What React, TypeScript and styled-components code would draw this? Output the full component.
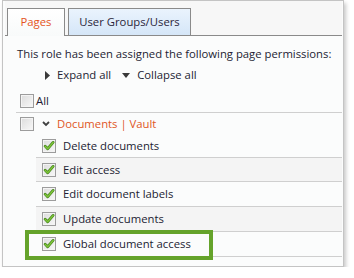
import styled, { createGlobalStyle } from 'styled-components';

const GlobalStyle = createGlobalStyle`
    body {
        margin: 0;
        background: #ffffff;
        font-family: "Open Sans", "Noto Sans", sans-serif;
        font-size: 11.3px;
        line-height: 16px;
        color: #231c33;
    }
`;

const Panel = styled.div`
    margin-left: 2px;
    width: 340px;
    height: 265px;
    border: 1px solid #c4c4c4;
    background: #fbfcfc;
    box-shadow: 2px 3px 4px rgba(0, 0, 0, 0.22);
`;

const TabBar = styled.div`
    display: flex;
    align-items: flex-end;
    gap: 3px;
    height: 34px;
    margin: 0 1px 0 2px;
    padding-left: 2px;
    background: #f7f7f7;
    border-bottom: 1px solid #8a8a8a;
`;

const Tab = styled.div<{ $active?: boolean; $w: number }>`
    box-sizing: border-box;
    display: flex;
    align-items: center;
    justify-content: center;
    width: ${p => p.$w}px;
    height: ${p => (p.$active ? '28px' : '27px')};
    margin-bottom: ${p => (p.$active ? '-1px' : '0')};
    padding-bottom: ${p => (p.$active ? '1px' : '0')};
    border: 1px solid #8a8a8a;
    border-bottom: none;
    color: ${p => (p.$active ? '#e5541c' : '#2a1f3a')};
    background: ${p =>
        p.$active
            ? 'linear-gradient(#ffffff, #f8fafa)'
            : 'linear-gradient(#eaf3fd, #d5e6f8)'};
`;

const Body = styled.div`
    padding: 10px 0 0 14px;
`;

const Intro = styled.p`
    margin: 0;
    white-space: nowrap;
`;

const Toggles = styled.div`
    display: flex;
    align-items: center;
    margin: 5px 0 0 28px;
`;

const Toggle = styled.span<{ $gap: number }>`
    display: flex;
    align-items: center;
    gap: ${p => p.$gap}px;
    margin-right: 11px;
`;

const List = styled.div`
    margin-top: 6px;
    margin-right: 1px;
`;

const Row = styled.div<{ $child?: boolean; $shade?: boolean; $line?: boolean; $h?: number }>`
    position: relative;
    display: flex;
    align-items: center;
    height: ${p => p.$h ?? 24}px;
    margin-left: ${p => (p.$child ? '33px' : '13px')};
    padding-left: ${p => (p.$child ? '6px' : '4px')};
    background: ${p => (p.$shade ? '#f4f4f4' : 'transparent')};
    border-bottom: ${p => (p.$line ? '1px solid #cfcfcf' : 'none')};
`;

const Label = styled.span<{ $accent?: boolean; $gap: number }>`
    margin-left: ${p => p.$gap}px;
    color: ${p => (p.$accent ? '#e0561f' : '#231c33')};
`;

const Box = styled.span`
    display: inline-flex;
    align-items: center;
    justify-content: center;
    box-sizing: border-box;
    width: 14px;
    height: 14px;
    border: 1px solid #9c9c9c;
    background: linear-gradient(135deg, #dcdcdc, #f8f8f8);
    box-shadow: inset 0 0 0 1px #f4f4f4;
`;

const Chevron = styled.span`
    display: inline-flex;
    margin-left: 8px;
`;

const Highlight = styled.div`
    position: absolute;
    left: -11px;
    top: -2px;
    width: 180px;
    height: 22px;
    border: 4px solid #65a32b;
    pointer-events: none;
`;

const Check = () => (
    <svg width="14" height="14" viewBox="0 0 14 14">
        <path d="M2.5 7.2 L5.4 10.2 L11.8 2.8" fill="none" stroke="#3f7f17" strokeWidth="3.2" strokeLinecap="round" strokeLinejoin="round" />
        <path d="M2.5 7.2 L5.4 10.2 L11.8 2.8" fill="none" stroke="#7fc63a" strokeWidth="1.7" strokeLinecap="round" strokeLinejoin="round" />
    </svg>
);

const CheckBox = ({ checked }: { checked?: boolean }) => (
    <Box>{checked && <Check />}</Box>
);

const permissions = [
    { name: 'Delete documents', shade: false, h: 22 },
    { name: 'Edit access', shade: true, h: 23 },
    { name: 'Edit document labels', shade: false, h: 24 },
    { name: 'Update documents', shade: true, h: 24 },
    { name: 'Global document access', shade: false, h: 24, marked: true },
];

const App = () => {
    return <>
        <GlobalStyle />
        <Panel>
            <TabBar>
                <Tab $active $w={58}>Pages</Tab>
                <Tab $w={123}>User Groups/Users</Tab>
            </TabBar>
            <Body>
                <Intro>This role has been assigned the following page permissions:</Intro>
                <Toggles>
                    <Toggle $gap={7}>
                        <svg width="5" height="9" viewBox="0 0 5 9"><path d="M0 0 L5 4.5 L0 9 Z" fill="#3a3a3a" /></svg>
                        Expand all
                    </Toggle>
                    <Toggle $gap={7}>
                        <svg width="8" height="5" viewBox="0 0 8 5"><path d="M0 0 L8 0 L4 5 Z" fill="#3a3a3a" /></svg>
                        Collapse all
                    </Toggle>
                </Toggles>
            </Body>
            <List>
                <Row $line $h={23}>
                    <CheckBox />
                    <Label $gap={2}>All</Label>
                </Row>
                <Row $h={22}>
                    <CheckBox />
                    <Chevron>
                        <svg width="8" height="6" viewBox="0 0 8 6"><path d="M1 1 L4 4 L7 1" fill="none" stroke="#404040" strokeWidth="1.8" /></svg>
                    </Chevron>
                    <Label $accent $gap={7}>Documents | Vault</Label>
                </Row>
                {permissions.map(p => (
                    <Row key={p.name} $child $line $shade={p.shade} $h={p.h}>
                        <CheckBox checked />
                        <Label $gap={7}>{p.name}</Label>
                        {p.marked && <Highlight />}
                    </Row>
                ))}
            </List>
        </Panel>
    </>;
};

export default App;
